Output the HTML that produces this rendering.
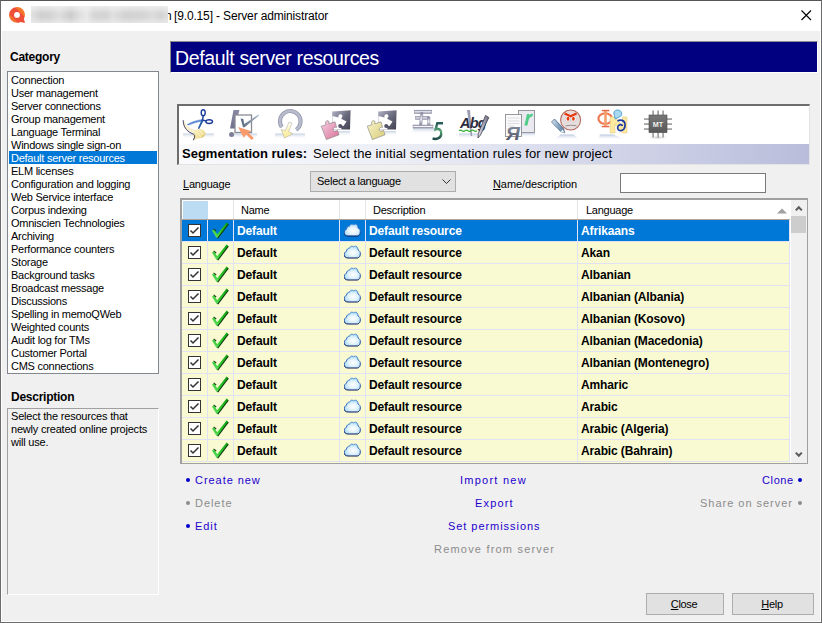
<!DOCTYPE html>
<html><head><meta charset="utf-8">
<style>
*{box-sizing:border-box;margin:0;padding:0}
html,body{width:822px;height:623px;overflow:hidden;background:#f0f0f0;font-family:"Liberation Sans",sans-serif;font-size:11px;color:#000}
.a{position:absolute;white-space:nowrap}
#brd{position:absolute;left:0;top:0;width:822px;height:623px;border:1px solid #6b6b6b;border-top-color:#555}
#brd2{position:absolute;left:1px;top:1px;width:820px;height:621px;border:1px solid #fff;border-top:0}
#title{position:absolute;left:1px;top:1px;width:820px;height:30px;background:#fff}
.cat{position:absolute;left:7px;top:71px;width:152px;height:303px;background:#fff;border:1px solid #828790;padding-top:1px}
.cat div{height:13px;line-height:14px;padding-left:3px;letter-spacing:-0.25px;white-space:nowrap}
.cat div.sel{background:#0078d7;color:#fff;margin-left:1px;margin-right:1px;padding-left:2px}
.lbl{font-weight:bold;font-size:12px;letter-spacing:-0.25px}
.desc{position:absolute;left:7px;top:408px;width:152px;height:187px;border:1px solid #a0a0a0;border-right-color:#fff;border-bottom-color:#fff;background:#f0f0f0;line-height:13px;padding:1px 0 0 3px;letter-spacing:-0.2px}
.hdr{position:absolute;left:170px;top:41px;width:648px;height:32px;background:#000080;color:#fff;font-size:19.5px;letter-spacing:-0.35px;line-height:32px;padding-left:4px;border-top:1px solid #8c8c8c;border-left:1px solid #8c8c8c;border-bottom:1px solid #fff;border-right:1px solid #fff}
.tb{position:absolute;left:177px;top:104px;width:633px;height:61px;border-top:2px solid #6d6d6d;border-left:2px solid #6d6d6d;border-right:1px solid #e3e3e3;border-bottom:1px solid #e3e3e3;background:#fff}
.seg{position:absolute;left:0;top:38px;width:630px;height:20px;background:linear-gradient(to right,#fafafc 0%,#eceef6 35%,#b9bddb 100%);font-size:13px;line-height:19px;padding-left:3px}
.ico{position:absolute;top:4px;width:32px;height:32px}
.lnk{position:absolute;font-size:11px;letter-spacing:0.85px;color:#2200cc;line-height:13px;white-space:nowrap;top:0}
.dis{color:#8c8c8c}
.bul{position:absolute;width:4px;height:4px;border-radius:50%;background:#0000cc}
.bul.dis{background:#8c8c8c}
.btn{position:absolute;background:#e1e1e1;border:1px solid #adadad;text-align:center;line-height:20px;font-size:11px}
.grid{position:absolute;left:180px;top:198px;width:628px;height:266px;border-top:2px solid #a0a0a0;border-left:2px solid #a0a0a0;border-right:1px solid #a0a0a0;border-bottom:1px solid #a0a0a0;background:#fafad2;overflow:hidden}
.gh{position:absolute;left:0;top:0;width:608px;height:20px;background:#fff;border-bottom:1px solid #b0a498}
.gh div{position:absolute;top:0;height:19px;line-height:20px;letter-spacing:-0.25px}
.row{position:absolute;left:0;width:608px;height:22px;border-bottom:1px solid #e2e2f6;border-right:1px solid #e2e2f6;font-weight:bold;font-size:12px;letter-spacing:-0.12px}
.row div{position:absolute;top:0;height:21px;line-height:22px}
.row .c{border-right:1px solid #e2e2f6}
.row.s{background:#0078d7;color:#fff}
.row.s .c{border-right-color:#e4e4f8}
.cb{position:absolute;left:6px;top:4px;width:13px;height:13px;border:1px solid #333;background:#fff}
.sb{position:absolute;left:608px;top:0;width:17px;height:263px;background:#f0f0f0;border-left:1px solid #fff}
</style></head><body>

<div id="title">
 <svg class="a" style="left:7px;top:4px" width="19" height="19" viewBox="0 0 19 19">
  <defs><linearGradient id="qg" x1="1" y1="0" x2="0" y2="1"><stop offset="0" stop-color="#f67e2a"/><stop offset="0.3" stop-color="#f47428"/><stop offset="0.34" stop-color="#ee4c3a"/><stop offset="0.7" stop-color="#ef5236"/><stop offset="0.74" stop-color="#f3702e"/><stop offset="1" stop-color="#f47a2c"/></linearGradient></defs>
  <path d="M9 2 A7.9 7.9 0 1 0 12.6 16.9 L16.9 17.9 L15.9 13.8 A7.9 7.9 0 0 0 9 2 Z" fill="url(#qg)"/>
  <circle cx="9" cy="9.9" r="2.9" fill="#fff"/>
 </svg>
 <div class="a" style="left:164px;top:8px;font-size:12px;line-height:14px">n</div>
 <div class="a" style="left:30px;top:5px;width:137px;height:17px;background:linear-gradient(to bottom,rgba(245,245,245,0.7),rgba(240,240,240,0) 45%,rgba(240,240,240,0) 65%,rgba(240,240,240,0.6)),linear-gradient(to right,#e2e2e2 0px,#d0d0d0 10px,#d2d2d2 18px,#dedede 28px,#cdcdcd 40px,#e2e2e2 50px,#e8e8e8 56px,#d6d6d6 63px,#d4d4d4 75px,#e0e0e0 82px,#d2d2d2 95px,#d4d4d4 110px,#dcdcdc 122px,#d4d4d4 130px,#dedede 137px)"></div>
 <div class="a" style="left:173px;top:8px;font-size:12px;line-height:14px;letter-spacing:-0.15px">[9.0.15] - Server administrator</div>
 <svg class="a" style="left:799px;top:8px" width="12" height="12" viewBox="0 0 12 12"><path d="M1.5 1.5 L11 11 M11 1.5 L1.5 11" stroke="#000" stroke-width="1.1"/></svg>
</div>

<div class="a lbl" style="left:10px;top:51px;line-height:13px">Category</div>
<div class="cat"><div>Connection</div><div>User management</div><div>Server connections</div><div>Group management</div><div>Language Terminal</div><div>Windows single sign-on</div><div class=sel>Default server resources</div><div>ELM licenses</div><div>Configuration and logging</div><div>Web Service interface</div><div>Corpus indexing</div><div>Omniscien Technologies</div><div>Archiving</div><div>Performance counters</div><div>Storage</div><div>Background tasks</div><div>Broadcast message</div><div>Discussions</div><div>Spelling in memoQWeb</div><div>Weighted counts</div><div>Audit log for TMs</div><div>Customer Portal</div><div>CMS connections</div></div>
<div class="a lbl" style="left:11px;top:391px;line-height:13px">Description</div>
<div class="desc">Select the resources that<br>newly created online projects<br>will use.</div>
<div class="hdr">Default server resources</div>

<svg width="0" height="0" style="position:absolute">
 <defs>
  <linearGradient id="gchk" x1="0" y1="1" x2="1" y2="0"><stop offset="0" stop-color="#8ae08a"/><stop offset="0.35" stop-color="#30d030"/><stop offset="1" stop-color="#10a010"/></linearGradient>
  <symbol id="chk" viewBox="0 0 18 17">
   <path d="M5.6 15.6 L16.2 1.4 L17.8 2.6 L7.2 16.6 Z" fill="#0c3c0c"/>
   <path d="M0.9 8.6 L3.2 7.6 L6.2 12.2 L15.6 0.6 L17 1.8 L6.4 15.8 L5.2 15.6 Z" fill="url(#gchk)"/>
   <path d="M2.6 6.8 L5.2 9" fill="none" stroke="#184818" stroke-width="1.1"/>
  </symbol>
  <radialGradient id="gcl" cx="0.55" cy="0.55" r="0.6"><stop offset="0" stop-color="#ffffff"/><stop offset="0.5" stop-color="#e0f2fc"/><stop offset="1" stop-color="#9cd4f4"/></radialGradient>
  <linearGradient id="gcls" x1="0" y1="0" x2="0" y2="1"><stop offset="0" stop-color="#4a8ad8"/><stop offset="0.6" stop-color="#2a5ab0"/><stop offset="1" stop-color="#0a1458"/></linearGradient>
  <symbol id="cloud" viewBox="0 0 17 14"><path d="M4 13 C1.5 13 0 11.5 0.3 9.5 C0.5 7.5 1.5 6.5 2.5 6.2 C2.5 4.5 3.8 3.2 5.5 3.2 C6 1.8 7 1 8.2 1.2 C9 1.3 9.5 1.8 9.8 2 C10.3 1.2 11.2 1 12 1.3 C13.5 2 14 3.5 14 5 C15.5 5.5 16.5 7 16.3 9 C16.2 11 15.5 12.5 13.5 13 Z" fill="url(#gcl)" stroke="url(#gcls)" stroke-width="1"/></symbol>
 
<linearGradient id="refl" x1="0" y1="0" x2="0" y2="1"><stop offset="0" stop-color="#c4d0e2"/><stop offset="1" stop-color="#ffffff" stop-opacity="0"/></linearGradient>
<linearGradient id="refl2" x1="0" y1="0" x2="0" y2="1"><stop offset="0" stop-color="#b8c6de"/><stop offset="1" stop-color="#ffffff" stop-opacity="0"/></linearGradient>
<linearGradient id="ypaper" x1="0" y1="0" x2="1" y2="1"><stop offset="0" stop-color="#fbf4cc"/><stop offset="0.6" stop-color="#f0e09a"/><stop offset="1" stop-color="#c8a840"/></linearGradient>
<linearGradient id="gpur" x1="0" y1="0" x2="0" y2="1"><stop offset="0" stop-color="#8888a6"/><stop offset="1" stop-color="#70708c"/></linearGradient>
<linearGradient id="gdark" x1="0" y1="0" x2="1" y2="1"><stop offset="0" stop-color="#b4b4c8"/><stop offset="0.5" stop-color="#6c6c80"/><stop offset="1" stop-color="#404050"/></linearGradient>
<linearGradient id="gpink" x1="0" y1="0" x2="1" y2="1"><stop offset="0" stop-color="#f6d2e2"/><stop offset="1" stop-color="#d87098"/></linearGradient>
<linearGradient id="gyel" x1="0" y1="0" x2="1" y2="1"><stop offset="0" stop-color="#f8f4cc"/><stop offset="1" stop-color="#d8cc78"/></linearGradient>
<linearGradient id="gsil" x1="0" y1="0" x2="0" y2="1"><stop offset="0" stop-color="#80809a"/><stop offset="0.5" stop-color="#f4f4fa"/><stop offset="1" stop-color="#7a7a92"/></linearGradient>
<linearGradient id="ggrn" x1="0" y1="0" x2="0" y2="1"><stop offset="0" stop-color="#2a5a5a"/><stop offset="0.5" stop-color="#5aa87a"/><stop offset="1" stop-color="#1e4a4a"/></linearGradient>
<linearGradient id="gpen" x1="0" y1="0" x2="1" y2="0"><stop offset="0" stop-color="#e8e8f0"/><stop offset="1" stop-color="#6a6a80"/></linearGradient>
<linearGradient id="gya" x1="0" y1="0" x2="0" y2="1"><stop offset="0" stop-color="#8a96a4"/><stop offset="1" stop-color="#484858"/></linearGradient>
<linearGradient id="gpen2" x1="0" y1="0" x2="1" y2="0"><stop offset="0" stop-color="#dce8f2"/><stop offset="0.5" stop-color="#88a8c4"/><stop offset="1" stop-color="#58789a"/></linearGradient>
<linearGradient id="gchk2" x1="0" y1="0" x2="1" y2="0"><stop offset="0" stop-color="#5a6a80"/><stop offset="1" stop-color="#a8b4c8"/></linearGradient>
<linearGradient id="garr" x1="0" y1="0" x2="0" y2="1"><stop offset="0" stop-color="#ffffff"/><stop offset="0.5" stop-color="#fcf2b8"/><stop offset="1" stop-color="#f8ec98"/></linearGradient>
<linearGradient id="gchip" x1="0" y1="0" x2="0" y2="1"><stop offset="0" stop-color="#787878"/><stop offset="1" stop-color="#585858"/></linearGradient>
<radialGradient id="gshadow" cx="0.5" cy="0.5" r="0.5"><stop offset="0" stop-color="#c8c8c8"/><stop offset="1" stop-color="#ffffff" stop-opacity="0"/></radialGradient>
</defs>
</svg>

<div class="tb"><svg class="a" style="left:1px;top:0" width="36" height="36" viewBox="0 0 36 36"><rect x="3" y="27.5" width="31" height="5" fill="url(#refl)"/>
<path d="M3.2 13.8 C2.8 19 5 23.5 10 25.5 L15.5 27 L17.5 24.5 C12 23.5 7 21 5 16.5 Z" fill="#f6eecc"/>
<path d="M14.8 24 C19 22.3 24.2 23 25.4 26.6 C26 30 23 32.6 18 32.2 L13.4 34.2 L14.6 31 C12 30 12 26 14.8 24 Z" fill="url(#ypaper)"/>
<path d="M16.5 25.5 L21 31 M19.5 24.5 L23.5 29" stroke="#fff8d0" stroke-width="0.8"/>
<path d="M3.2 14.2 C3.2 20 6 25 12 27.5 C14 28.3 15 29 14.6 31 L13.4 34.2" fill="none" stroke="#2c2c58" stroke-width="0.9"/>
<path d="M7.2 18.6 C11 16 16 14.6 22.2 13.4 L22.6 15 C17 16 12 17.5 8.6 19 Z" fill="#5a8ad8" stroke="#3a6ac0" stroke-width="0.4"/>
<path d="M21.6 13.8 L23.6 14.4 L19.2 23 L17.8 22.4 Z" fill="#2a5aaa"/>
<path d="M22.6 14 L23.2 9.8 M22.6 14 L26.2 15.2" fill="none" stroke="#1a3a9a" stroke-width="1.4"/>
<ellipse cx="23.2" cy="6.8" rx="2" ry="3" fill="none" stroke="#1a3a9a" stroke-width="1.4"/>
<ellipse cx="29.2" cy="15.6" rx="3.3" ry="1.9" fill="none" stroke="#1a3a9a" stroke-width="1.4"/></svg><svg class="a" style="left:47px;top:0" width="36" height="36" viewBox="0 0 36 36"><rect x="3" y="27.5" width="28" height="5" fill="url(#refl)"/>
<path d="M7.5 4 L13.4 4 L9 22.5 L4 22.5 Z" fill="url(#gpur)"/>
<circle cx="5.6" cy="28.6" r="2.5" fill="#7e7e96"/>
<rect x="9" y="9" width="16.5" height="17.5" fill="#fff" stroke="#8a8a94" stroke-width="1.3"/>
<path d="M14.6 12.6 L17.4 13 L18.2 18 L32.6 8.4 L33 9.6 L18.6 21.2 L17 21.2 Z" fill="url(#gchk2)"/>
<path d="M12 21 L25.5 25.2 L22.3 26.6 L27.8 32 L25.6 34 L20.2 28.6 L17.8 31.8 Z" fill="#f89a6a"/></svg><svg class="a" style="left:93px;top:0" width="36" height="36" viewBox="0 0 36 36"><rect x="3" y="27.5" width="30" height="5.5" fill="url(#refl)"/>
<path d="M9.8 21.2 A10.3 10.3 0 1 1 24.2 23.8" fill="none" stroke="#9296ac" stroke-width="4"/><path d="M9.8 21.2 A10.3 10.3 0 1 1 24.2 23.8" fill="none" stroke="#b8bccc" stroke-width="2.4"/>
<path d="M17 16 L20 17 L16.6 25.6 L20.8 27.6 L12.6 32 L9.2 23.6 L13.4 24.6 Z" fill="url(#garr)" stroke="#a8a898" stroke-width="0.5"/></svg><svg class="a" style="left:139px;top:0" width="36" height="36" viewBox="0 0 36 36"><rect x="21" y="25" width="11" height="5" fill="url(#refl)"/>
<path d="M14.2 5.6 L32.6 4.2 L32 23.6 L14.2 23.6 Z" fill="url(#gdark)"/>
<path d="M14.4 10 L20.5 11.5 C19.5 8.5 23.5 7 24.5 10 L23.2 12.8 L28.5 15.5 L25.5 20 C24.5 19 21 19 22.5 21.5 L24 23.5 L14.4 23.5 Z" fill="#fff"/><circle cx="22.2" cy="20" r="2" fill="#54546a"/>
<path d="M3.2 20.2 L8.2 18.6 C6 16.5 9 13 11 15.5 L10.8 17.8 L17 15.8 L18.6 21.4 C15.5 20.5 14 24 16.5 25.3 L19.8 24.5 L21 28.8 L8.4 33.6 Z" fill="url(#gpink)" stroke="#6a6a6a" stroke-width="0.5"/></svg><svg class="a" style="left:185px;top:0" width="36" height="36" viewBox="0 0 36 36"><rect x="21" y="25" width="11" height="5" fill="url(#refl)"/>
<path d="M14.2 5.6 L32.6 4.2 L32 23.6 L14.2 23.6 Z" fill="url(#gdark)"/>
<path d="M14.4 10 L20.5 11.5 C19.5 8.5 23.5 7 24.5 10 L23.2 12.8 L28.5 15.5 L25.5 20 C24.5 19 21 19 22.5 21.5 L24 23.5 L14.4 23.5 Z" fill="#fff"/><circle cx="22.2" cy="20" r="2" fill="#54546a"/>
<path d="M3.2 20.2 L8.2 18.6 C6 16.5 9 13 11 15.5 L10.8 17.8 L17 15.8 L18.6 21.4 C15.5 20.5 14 24 16.5 25.3 L19.8 24.5 L21 28.8 L8.4 33.6 Z" fill="url(#gyel)" stroke="#6a6a6a" stroke-width="0.5"/></svg><svg class="a" style="left:231px;top:0" width="36" height="36" viewBox="0 0 36 36"><rect x="3" y="22" width="23" height="6" fill="url(#refl)"/>
<g fill="url(#gsil)" stroke="#8a8aa0" stroke-width="0.5">
<rect x="4.2" y="4.2" width="17.6" height="3.2"/>
<rect x="5.5" y="10.5" width="13.5" height="2.8"/>
<path d="M10.6 6.5 L13 6.5 L11.8 19.5 L9.4 19.5 Z"/>
<rect x="17.6" y="11" width="2.4" height="8.8"/>
<rect x="3" y="19" width="20" height="3"/>
</g>
<path d="M33 17.3 L27.3 17.3 L25.6 23.4 C29.5 22 31.8 24.6 31.2 28.5 C30.5 32.5 26 33.8 22.6 32.4" fill="none" stroke="url(#ggrn)" stroke-width="2.4"/></svg><svg class="a" style="left:277px;top:0" width="36" height="36" viewBox="0 0 36 36"><rect x="3" y="27.5" width="20" height="5.5" fill="url(#refl)"/>
<path d="M11 4 L14 4 L16.2 30 L14.8 30 Z" fill="#9a9cb4"/>
<text x="4" y="22" font-family="Liberation Sans" font-weight="bold" font-style="italic" font-size="14.5" fill="#2c2c40" letter-spacing="-0.8">Abg</text>
<path d="M3 24.8 Q4.5 23.6 6 24.8 T9 24.8 T12 24.8 T15 24.8 T18 24.8 T21 24.8" fill="none" stroke="#38b038" stroke-width="1.3"/>
<path d="M29.5 9.5 L32.8 11.5 L24.5 29 L22 32 L22.3 27.5 Z" fill="url(#gpen)" stroke="#3a3a4a" stroke-width="0.8"/></svg><svg class="a" style="left:323px;top:0" width="36" height="36" viewBox="0 0 36 36"><rect x="19" y="27" width="14" height="4.5" fill="url(#refl)"/>
<rect x="16.5" y="4.5" width="16" height="22" fill="#e9e9ef" stroke="#8e8e96" stroke-width="0.9"/>
<path d="M25 8 L27.6 8 L27.3 9.8 C28 8.4 29.2 7.8 31 7.8 L30.4 10.6 C28.4 10.6 27.4 11.6 26.8 13.6 L25.4 19.6 L22.4 19.6 Z" fill="#50cc88"/>
<rect x="3.5" y="8.5" width="16" height="22" fill="#fafafa" stroke="#8e8e96" stroke-width="0.9"/>
<g stroke="#dcdce4" stroke-width="1.2"><path d="M5.5 12 H17.5 M5.5 15 H17.5 M5.5 17.5 H17.5 M5.5 20 H12 M5.5 23 H8 M5.5 26 H8"/></g>
<text x="4" y="34" font-family="Liberation Sans" font-weight="bold" font-style="italic" font-size="19" fill="url(#gya)">Я</text></svg><svg class="a" style="left:369px;top:0" width="36" height="36" viewBox="0 0 36 36"><path d="M12.5 28.5 L25.5 28.5 L32 34 L6 34 Z" fill="url(#refl2)"/>
<circle cx="22.6" cy="14" r="10" fill="#e6dede" stroke="#b46a5c" stroke-width="1.1"/>
<ellipse cx="19.8" cy="12.8" rx="2.7" ry="3.1" fill="#fafafa" stroke="#c0b8b8" stroke-width="0.5"/>
<ellipse cx="25.6" cy="12.8" rx="2.7" ry="3.1" fill="#fafafa" stroke="#c0b8b8" stroke-width="0.5"/>
<ellipse cx="20" cy="12.8" rx="1.4" ry="2" fill="#e8380e"/>
<ellipse cx="25.4" cy="12.8" rx="1.4" ry="2" fill="#e8380e"/>
<path d="M16.6 7.4 L22.6 10.2 L28.6 7.4" fill="none" stroke="#e8380e" stroke-width="2.2" stroke-linejoin="round"/>
<path d="M17.5 19.8 Q22.5 18.8 28.5 19.6" fill="none" stroke="#9a9090" stroke-width="1"/>
<path d="M3.5 16 L6.5 13 L15.5 22.5 L16.8 26.8 L12.6 25.4 Z" fill="url(#gpen2)" stroke="#3a5a7a" stroke-width="0.7"/>
<path d="M12.6 25.4 L14.6 23.6 L16.8 26.8 Z" fill="#e8f0f4"/></svg><svg class="a" style="left:415px;top:0" width="36" height="36" viewBox="0 0 36 36"><path d="M6 28.5 L19 28.5 L33 34 L4 34 Z" fill="url(#refl2)"/>
<ellipse cx="11.2" cy="12.6" rx="6.8" ry="5.2" fill="none" stroke="#ee7a54" stroke-width="2.2"/>
<rect x="10.2" y="4.2" width="2.6" height="16.8" fill="#f4a070"/>
<rect x="7.8" y="3.8" width="7.6" height="1.5" fill="#e86a4a"/>
<rect x="7.8" y="19.8" width="7.6" height="1.5" fill="#e86a4a"/>
<path d="M16.2 11 L21 11 L28.5 20 L28.5 11 L33 11 L33 27 L28.5 27 L21 18 L21 27 L16.2 27 Z" fill="#fde9a0" stroke="#dcc070" stroke-width="0.5"/>
<path d="M23.5 15 C26 13.5 30.5 14 31 18 C31.5 22 29.5 25 25.5 24.5 C23.5 24 23 21 24.5 19.5 C26 18 28 18.5 28.5 20" fill="none" stroke="#1c3aa0" stroke-width="1.7"/>
<path d="M20.5 9.5 C18.5 6 21.5 3.2 24.8 4.2 C27.8 5 28.6 8.5 26.8 10 C25.4 11.2 23 12 21.2 13 Z" fill="#aad8ee" stroke="#4aa0d0" stroke-width="1"/></svg><svg class="a" style="left:461px;top:0" width="36" height="36" viewBox="0 0 36 36"><ellipse cx="18" cy="31.5" rx="12" ry="2.6" fill="url(#gshadow)"/>
<g fill="#a4a4a4"><rect x="12.2" y="4.5" width="1.8" height="5"/><rect x="17.2" y="4.5" width="1.8" height="5"/><rect x="22.2" y="4.5" width="1.8" height="5"/>
<rect x="12.2" y="26.5" width="1.8" height="5"/><rect x="17.2" y="26.5" width="1.8" height="5"/><rect x="22.2" y="26.5" width="1.8" height="5"/>
<rect x="4" y="12.2" width="5" height="1.8"/><rect x="4" y="17.2" width="5" height="1.8"/><rect x="4" y="22.2" width="5" height="1.8"/>
<rect x="27" y="12.2" width="5" height="1.8"/><rect x="27" y="17.2" width="5" height="1.8"/><rect x="27" y="22.2" width="5" height="1.8"/></g>
<rect x="9" y="9" width="18" height="17.6" fill="url(#gchip)" stroke="#4a4a4a" stroke-width="0.6"/>
<text x="18" y="20.6" text-anchor="middle" font-family="Liberation Sans" font-weight="bold" font-size="7.2" fill="#f0f0f0">MT</text></svg>
 <div class="seg"><b>Segmentation rules:</b><span style="margin-left:6px;letter-spacing:0.11px">Select the initial segmentation rules for new project</span></div>
</div>

<div class="a" style="left:183px;top:177px;line-height:14px;letter-spacing:-0.2px"><u>L</u>anguage</div>
<div class="a" style="left:310px;top:171px;width:146px;height:21px;background:#e1e1e1;border:1px solid #adadad;line-height:19px;padding-left:6px;letter-spacing:-0.25px">Select a language
 <svg class="a" style="left:131px;top:7px" width="9" height="6" viewBox="0 0 9 6"><path d="M0.5 0.5 L4.5 4.5 L8.5 0.5" fill="none" stroke="#333" stroke-width="1"/></svg></div>
<div class="a" style="left:493px;top:177px;line-height:14px;letter-spacing:-0.1px"><u>N</u>ame/description</div>
<div class="a" style="left:620px;top:173px;width:146px;height:20px;background:#fff;border:1px solid #7a7a7a"></div>

<div class="grid">
 <div class="gh">
  <div style="left:1px;top:1px;width:25px;height:18px;background:#bcdcf4"></div>
  <div style="left:26px;width:26px;border-right:1px solid #e5e5e5"></div>
  <div style="left:52px;width:106px;padding-left:7px;border-right:1px solid #e5e5e5">Name</div>
  <div style="left:158px;width:26px;border-right:1px solid #e5e5e5"></div>
  <div style="left:184px;width:212px;padding-left:7px;border-right:1px solid #e5e5e5">Description</div>
  <div style="left:396px;width:211px;padding-left:8px">Language</div>
  <svg class="a" style="left:595px;top:8px" width="10" height="6" viewBox="0 0 10 6"><path d="M0 5.5 L5 0.5 L10 5.5Z" fill="#a0a0a0"/></svg>
 </div>
 <div class="row s" style="top:20px">
<div class="c" style="left:0;width:26px"><span class="cb"><svg width="11" height="11" viewBox="0 0 11 11" style="position:absolute;left:0;top:0"><path d="M1.5 5.5 L4 8 L9.5 2.5" fill="none" stroke="#333" stroke-width="1.5"/></svg></span></div>
<div class="c" style="left:26px;width:26px"><svg class="a" style="left:3px;top:2px" width="18" height="17" viewBox="0 0 18 17"><use href="#chk"/></svg></div>
<div class="c" style="left:52px;width:106px;padding-left:3px">Default</div>
<div class="c" style="left:158px;width:26px"><svg class="a" style="left:4px;top:3px" width="17" height="14" viewBox="0 0 17 14"><use href="#cloud"/></svg></div>
<div class="c" style="left:184px;width:212px;padding-left:3px">Default resource</div>
<div style="left:396px;width:211px;padding-left:3px">Afrikaans</div>
</div><div class="row" style="top:42px">
<div class="c" style="left:0;width:26px"><span class="cb"><svg width="11" height="11" viewBox="0 0 11 11" style="position:absolute;left:0;top:0"><path d="M1.5 5.5 L4 8 L9.5 2.5" fill="none" stroke="#333" stroke-width="1.5"/></svg></span></div>
<div class="c" style="left:26px;width:26px"><svg class="a" style="left:3px;top:2px" width="18" height="17" viewBox="0 0 18 17"><use href="#chk"/></svg></div>
<div class="c" style="left:52px;width:106px;padding-left:3px">Default</div>
<div class="c" style="left:158px;width:26px"><svg class="a" style="left:4px;top:3px" width="17" height="14" viewBox="0 0 17 14"><use href="#cloud"/></svg></div>
<div class="c" style="left:184px;width:212px;padding-left:3px">Default resource</div>
<div style="left:396px;width:211px;padding-left:3px">Akan</div>
</div><div class="row" style="top:64px">
<div class="c" style="left:0;width:26px"><span class="cb"><svg width="11" height="11" viewBox="0 0 11 11" style="position:absolute;left:0;top:0"><path d="M1.5 5.5 L4 8 L9.5 2.5" fill="none" stroke="#333" stroke-width="1.5"/></svg></span></div>
<div class="c" style="left:26px;width:26px"><svg class="a" style="left:3px;top:2px" width="18" height="17" viewBox="0 0 18 17"><use href="#chk"/></svg></div>
<div class="c" style="left:52px;width:106px;padding-left:3px">Default</div>
<div class="c" style="left:158px;width:26px"><svg class="a" style="left:4px;top:3px" width="17" height="14" viewBox="0 0 17 14"><use href="#cloud"/></svg></div>
<div class="c" style="left:184px;width:212px;padding-left:3px">Default resource</div>
<div style="left:396px;width:211px;padding-left:3px">Albanian</div>
</div><div class="row" style="top:86px">
<div class="c" style="left:0;width:26px"><span class="cb"><svg width="11" height="11" viewBox="0 0 11 11" style="position:absolute;left:0;top:0"><path d="M1.5 5.5 L4 8 L9.5 2.5" fill="none" stroke="#333" stroke-width="1.5"/></svg></span></div>
<div class="c" style="left:26px;width:26px"><svg class="a" style="left:3px;top:2px" width="18" height="17" viewBox="0 0 18 17"><use href="#chk"/></svg></div>
<div class="c" style="left:52px;width:106px;padding-left:3px">Default</div>
<div class="c" style="left:158px;width:26px"><svg class="a" style="left:4px;top:3px" width="17" height="14" viewBox="0 0 17 14"><use href="#cloud"/></svg></div>
<div class="c" style="left:184px;width:212px;padding-left:3px">Default resource</div>
<div style="left:396px;width:211px;padding-left:3px">Albanian (Albania)</div>
</div><div class="row" style="top:108px">
<div class="c" style="left:0;width:26px"><span class="cb"><svg width="11" height="11" viewBox="0 0 11 11" style="position:absolute;left:0;top:0"><path d="M1.5 5.5 L4 8 L9.5 2.5" fill="none" stroke="#333" stroke-width="1.5"/></svg></span></div>
<div class="c" style="left:26px;width:26px"><svg class="a" style="left:3px;top:2px" width="18" height="17" viewBox="0 0 18 17"><use href="#chk"/></svg></div>
<div class="c" style="left:52px;width:106px;padding-left:3px">Default</div>
<div class="c" style="left:158px;width:26px"><svg class="a" style="left:4px;top:3px" width="17" height="14" viewBox="0 0 17 14"><use href="#cloud"/></svg></div>
<div class="c" style="left:184px;width:212px;padding-left:3px">Default resource</div>
<div style="left:396px;width:211px;padding-left:3px">Albanian (Kosovo)</div>
</div><div class="row" style="top:130px">
<div class="c" style="left:0;width:26px"><span class="cb"><svg width="11" height="11" viewBox="0 0 11 11" style="position:absolute;left:0;top:0"><path d="M1.5 5.5 L4 8 L9.5 2.5" fill="none" stroke="#333" stroke-width="1.5"/></svg></span></div>
<div class="c" style="left:26px;width:26px"><svg class="a" style="left:3px;top:2px" width="18" height="17" viewBox="0 0 18 17"><use href="#chk"/></svg></div>
<div class="c" style="left:52px;width:106px;padding-left:3px">Default</div>
<div class="c" style="left:158px;width:26px"><svg class="a" style="left:4px;top:3px" width="17" height="14" viewBox="0 0 17 14"><use href="#cloud"/></svg></div>
<div class="c" style="left:184px;width:212px;padding-left:3px">Default resource</div>
<div style="left:396px;width:211px;padding-left:3px">Albanian (Macedonia)</div>
</div><div class="row" style="top:152px">
<div class="c" style="left:0;width:26px"><span class="cb"><svg width="11" height="11" viewBox="0 0 11 11" style="position:absolute;left:0;top:0"><path d="M1.5 5.5 L4 8 L9.5 2.5" fill="none" stroke="#333" stroke-width="1.5"/></svg></span></div>
<div class="c" style="left:26px;width:26px"><svg class="a" style="left:3px;top:2px" width="18" height="17" viewBox="0 0 18 17"><use href="#chk"/></svg></div>
<div class="c" style="left:52px;width:106px;padding-left:3px">Default</div>
<div class="c" style="left:158px;width:26px"><svg class="a" style="left:4px;top:3px" width="17" height="14" viewBox="0 0 17 14"><use href="#cloud"/></svg></div>
<div class="c" style="left:184px;width:212px;padding-left:3px">Default resource</div>
<div style="left:396px;width:211px;padding-left:3px">Albanian (Montenegro)</div>
</div><div class="row" style="top:174px">
<div class="c" style="left:0;width:26px"><span class="cb"><svg width="11" height="11" viewBox="0 0 11 11" style="position:absolute;left:0;top:0"><path d="M1.5 5.5 L4 8 L9.5 2.5" fill="none" stroke="#333" stroke-width="1.5"/></svg></span></div>
<div class="c" style="left:26px;width:26px"><svg class="a" style="left:3px;top:2px" width="18" height="17" viewBox="0 0 18 17"><use href="#chk"/></svg></div>
<div class="c" style="left:52px;width:106px;padding-left:3px">Default</div>
<div class="c" style="left:158px;width:26px"><svg class="a" style="left:4px;top:3px" width="17" height="14" viewBox="0 0 17 14"><use href="#cloud"/></svg></div>
<div class="c" style="left:184px;width:212px;padding-left:3px">Default resource</div>
<div style="left:396px;width:211px;padding-left:3px">Amharic</div>
</div><div class="row" style="top:196px">
<div class="c" style="left:0;width:26px"><span class="cb"><svg width="11" height="11" viewBox="0 0 11 11" style="position:absolute;left:0;top:0"><path d="M1.5 5.5 L4 8 L9.5 2.5" fill="none" stroke="#333" stroke-width="1.5"/></svg></span></div>
<div class="c" style="left:26px;width:26px"><svg class="a" style="left:3px;top:2px" width="18" height="17" viewBox="0 0 18 17"><use href="#chk"/></svg></div>
<div class="c" style="left:52px;width:106px;padding-left:3px">Default</div>
<div class="c" style="left:158px;width:26px"><svg class="a" style="left:4px;top:3px" width="17" height="14" viewBox="0 0 17 14"><use href="#cloud"/></svg></div>
<div class="c" style="left:184px;width:212px;padding-left:3px">Default resource</div>
<div style="left:396px;width:211px;padding-left:3px">Arabic</div>
</div><div class="row" style="top:218px">
<div class="c" style="left:0;width:26px"><span class="cb"><svg width="11" height="11" viewBox="0 0 11 11" style="position:absolute;left:0;top:0"><path d="M1.5 5.5 L4 8 L9.5 2.5" fill="none" stroke="#333" stroke-width="1.5"/></svg></span></div>
<div class="c" style="left:26px;width:26px"><svg class="a" style="left:3px;top:2px" width="18" height="17" viewBox="0 0 18 17"><use href="#chk"/></svg></div>
<div class="c" style="left:52px;width:106px;padding-left:3px">Default</div>
<div class="c" style="left:158px;width:26px"><svg class="a" style="left:4px;top:3px" width="17" height="14" viewBox="0 0 17 14"><use href="#cloud"/></svg></div>
<div class="c" style="left:184px;width:212px;padding-left:3px">Default resource</div>
<div style="left:396px;width:211px;padding-left:3px">Arabic (Algeria)</div>
</div><div class="row" style="top:240px">
<div class="c" style="left:0;width:26px"><span class="cb"><svg width="11" height="11" viewBox="0 0 11 11" style="position:absolute;left:0;top:0"><path d="M1.5 5.5 L4 8 L9.5 2.5" fill="none" stroke="#333" stroke-width="1.5"/></svg></span></div>
<div class="c" style="left:26px;width:26px"><svg class="a" style="left:3px;top:2px" width="18" height="17" viewBox="0 0 18 17"><use href="#chk"/></svg></div>
<div class="c" style="left:52px;width:106px;padding-left:3px">Default</div>
<div class="c" style="left:158px;width:26px"><svg class="a" style="left:4px;top:3px" width="17" height="14" viewBox="0 0 17 14"><use href="#cloud"/></svg></div>
<div class="c" style="left:184px;width:212px;padding-left:3px">Default resource</div>
<div style="left:396px;width:211px;padding-left:3px">Arabic (Bahrain)</div>
</div>
 <div class="sb">
  <svg class="a" style="left:4px;top:5px" width="8" height="7" viewBox="0 0 8 7"><path d="M0.8 5.4 L3.8 2.2 L6.8 5.4" fill="none" stroke="#5a5a5a" stroke-width="2"/></svg>
  <div class="a" style="left:0px;top:16px;width:15px;height:17px;background:#cdcdcd"></div>
  <svg class="a" style="left:4px;top:251px" width="8" height="7" viewBox="0 0 8 7"><path d="M0.8 1.6 L3.8 4.8 L6.8 1.6" fill="none" stroke="#5a5a5a" stroke-width="2"/></svg>
 </div>
</div>
<div class="bul" style="left:186px;top:478px"></div>
<div class="bul dis" style="left:186px;top:501px"></div>
<div class="bul" style="left:186px;top:524px"></div>
<div class="lnk" style="left:195px;top:474px;letter-spacing:0.95px">Create new</div>
<div class="lnk dis" style="left:195px;top:497px;letter-spacing:0.95px">Delete</div>
<div class="lnk" style="left:195px;top:520px;letter-spacing:0.95px">Edit</div>
<div class="lnk" style="left:460px;top:474px;letter-spacing:1.25px">Import new</div>
<div class="lnk" style="left:475px;top:497px;letter-spacing:1.15px">Export</div>
<div class="lnk" style="left:448px;top:520px;letter-spacing:0.95px">Set permissions</div>
<div class="lnk dis" style="left:434px;top:543px;letter-spacing:1.2px">Remove from server</div>
<div class="lnk" style="left:762px;top:474px;letter-spacing:0.62px">Clone</div>
<div class="lnk dis" style="left:700px;top:497px;letter-spacing:0.98px">Share on server</div>
<div class="bul" style="left:798px;top:478px"></div>
<div class="bul dis" style="left:798px;top:501px"></div>

<div class="btn" style="left:646px;top:593px;width:78px;height:22px;letter-spacing:-0.35px;padding-right:2px"><u>C</u>lose</div>
<div class="btn" style="left:732px;top:593px;width:82px;height:22px;letter-spacing:-0.3px;padding-right:2px"><u>H</u>elp</div>
<div id="brd"></div>
<div id="brd2"></div>
</body></html>
